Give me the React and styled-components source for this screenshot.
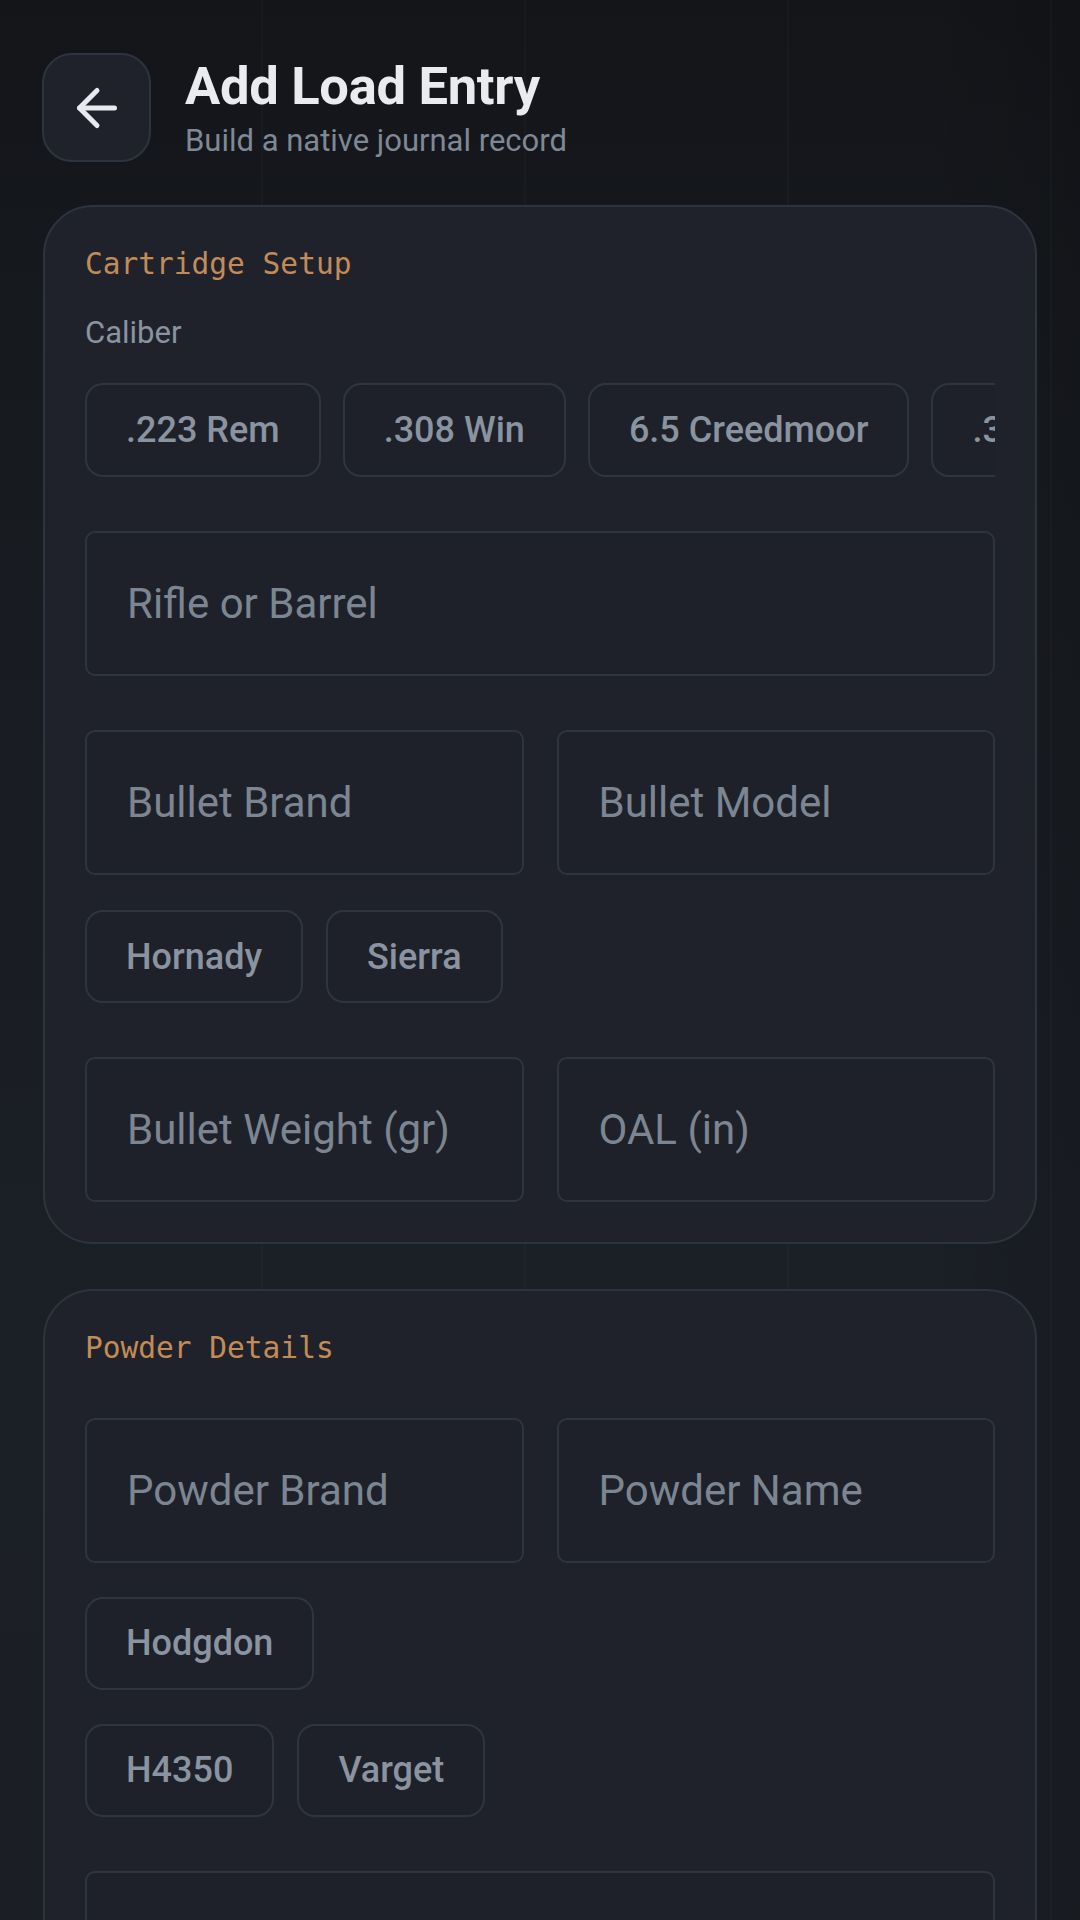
import React from "react";
import styled, { createGlobalStyle } from "styled-components";
import { ArrowLeft } from "lucide-react";

const GlobalStyle = createGlobalStyle`
  html, body {
    margin: 0;
    padding: 0;
    background: #16191e;
  }
  body {
    font-family: Roboto, "Noto Sans", "Liberation Sans", sans-serif;
  }
  * { box-sizing: border-box; }
`;

const Page = styled.div`
  min-height: 1920px;
  padding: 53px 43px 80px 43px;
  display: flex;
  flex-direction: column;
  gap: 43px;
  background:
    repeating-linear-gradient(90deg, transparent 0 261px, rgba(255,255,255,0.018) 261px 263px),
    linear-gradient(90deg, rgba(0,0,0,0) 85%, rgba(0,0,0,0.12) 100%),
    linear-gradient(180deg, #131519 0%, #171a1f 20%, #1b1f26 60%, #1b1e24 100%);
`;

const Header = styled.header`
  display: flex;
  align-items: center;
  gap: 34px;
  margin-left: -1px;
`;

const BackButton = styled.button`
  width: 109px;
  height: 109px;
  flex-shrink: 0;
  border-radius: 30px;
  border: 2px solid #2e343e;
  background: #1f222a;
  color: #e8eaee;
  display: flex;
  align-items: center;
  justify-content: center;
  padding: 0;
`;

const TitleBlock = styled.div`
  display: flex;
  flex-direction: column;
  gap: 6px;
`;

const Title = styled.h1`
  margin: 0;
  font-family: Roboto, sans-serif;
  font-weight: 700;
  font-size: 52.5px;
  line-height: 1.15;
  letter-spacing: -0.3px;
  color: #e9ebef;
`;

const Subtitle = styled.p`
  margin: 0;
  font-family: Roboto, sans-serif;
  font-weight: 400;
  font-size: 31px;
  line-height: 1.2;
  color: #7f8895;
`;

const Stack = styled.div`
  display: flex;
  flex-direction: column;
  gap: 45px;
`;

const Card = styled.section`
  background: #1f222a;
  border: 2px solid #2e343e;
  border-radius: 50px;
  padding: 40px;
  display: flex;
  flex-direction: column;
  gap: 54px;
`;

const CardHead = styled.div`
  display: flex;
  flex-direction: column;
  gap: 32px;
  margin-bottom: ${(p) => p.$pull || 0}px;
`;

const SectionTitle = styled.h2`
  margin: 0;
  font-family: "DejaVu Sans Mono", "Liberation Mono", monospace;
  font-weight: 400;
  font-size: 29.5px;
  line-height: 34.8px;
  color: #c38b57;
`;

const Label = styled.div`
  font-family: Roboto, sans-serif;
  font-size: 31px;
  line-height: 37.2px;
  color: #8a93a0;
`;

const Group = styled.div`
  display: flex;
  flex-direction: column;
  gap: ${(p) => p.$gap || 35}px;
`;

const ChipRow = styled.div`
  display: flex;
  gap: ${(p) => p.$gap || 23}px;
  overflow: hidden;
  flex-wrap: nowrap;
`;

const Chip = styled.button`
  flex-shrink: 0;
  height: ${(p) => p.$h || 93}px;
  padding: 0 39px;
  border-radius: 18px;
  border: 2px solid #2f3540;
  background: #1e2129;
  color: #8a93a0;
  font-family: Roboto, sans-serif;
  font-weight: 500;
  font-size: 36px;
  line-height: 1;
  display: inline-flex;
  align-items: center;
  white-space: nowrap;
`;

const FieldRow = styled.div`
  display: grid;
  grid-template-columns: 1fr 1fr;
  gap: 33px;
`;

const Input = styled.input`
  width: 100%;
  height: 145px;
  min-width: 0;
  border-radius: 10px;
  border: 2px solid #2f3540;
  background: #1e2129;
  padding: 0 40px;
  font-family: Roboto, sans-serif;
  font-size: 42px;
  color: #d6dae0;
  outline: none;
  &::placeholder {
    color: #7c8592;
  }
`;

const calibers = [".223 Rem", ".308 Win", "6.5 Creedmoor", ".300 Win Mag", "6mm ARC"];

export default function App() {
  return (
    <>
      <GlobalStyle />
      <Page>
        <Header>
          <BackButton aria-label="Back">
            <ArrowLeft size={60} strokeWidth={2} />
          </BackButton>
          <TitleBlock>
            <Title>Add Load Entry</Title>
            <Subtitle>Build a native journal record</Subtitle>
          </TitleBlock>
        </Header>

        <Stack>
          <Card>
            <CardHead>
              <SectionTitle>Cartridge Setup</SectionTitle>
              <Label>Caliber</Label>
              <ChipRow $gap={22}>
                {calibers.map((c) => (
                  <Chip key={c} $h={94}>{c}</Chip>
                ))}
              </ChipRow>
            </CardHead>

            <Input placeholder="Rifle or Barrel" />

            <Group>
              <FieldRow>
                <Input placeholder="Bullet Brand" />
                <Input placeholder="Bullet Model" />
              </FieldRow>
              <ChipRow>
                <Chip>Hornady</Chip>
                <Chip>Sierra</Chip>
              </ChipRow>
            </Group>

            <FieldRow>
              <Input placeholder="Bullet Weight (gr)" />
              <Input placeholder="OAL (in)" />
            </FieldRow>
          </Card>

          <Card>
            <CardHead $pull={-2}>
              <SectionTitle>Powder Details</SectionTitle>
            </CardHead>

            <Group $gap={34}>
              <FieldRow>
                <Input placeholder="Powder Brand" />
                <Input placeholder="Powder Name" />
              </FieldRow>
              <ChipRow>
                <Chip>Hodgdon</Chip>
              </ChipRow>
              <ChipRow>
                <Chip>H4350</Chip>
                <Chip>Varget</Chip>
              </ChipRow>
            </Group>

            <Input placeholder="Charge Weight (gr)" />
          </Card>
        </Stack>
      </Page>
    </>
  );
}
